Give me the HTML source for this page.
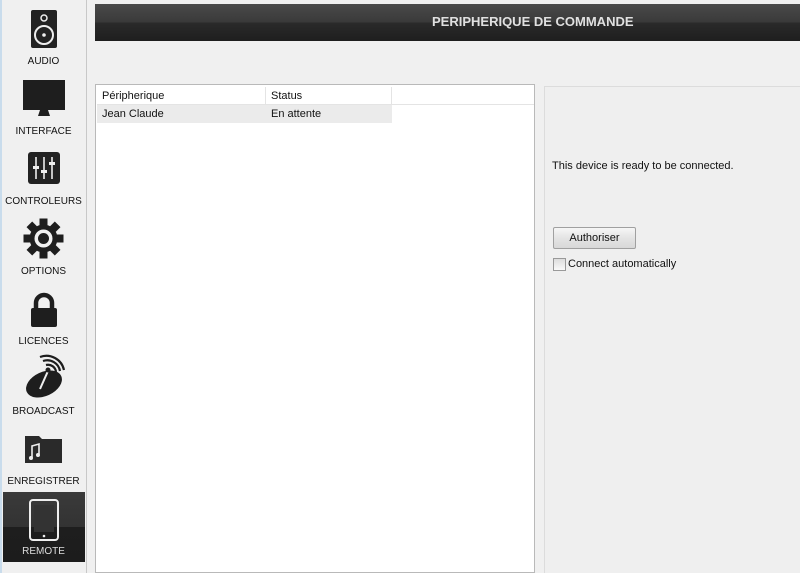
<!DOCTYPE html>
<html><head><meta charset="utf-8"><style>
*{margin:0;padding:0;box-sizing:border-box}
body{width:800px;height:573px;overflow:hidden;background:#f0f0f0;font-family:"Liberation Sans",sans-serif;font-size:11px;color:#111;position:relative}
.side{position:absolute;left:0;top:0;width:87px;height:573px;background:#f0f0f0;border-right:1px solid #c8c8c8;border-left:2px solid #c9dcec}
.lbl{position:absolute;left:0;width:87px;text-align:center;font-size:10px;color:#111}
.sel{position:absolute;left:3px;top:492px;width:82px;height:70px;background:linear-gradient(#3a3a3a 0,#333 50%,#1e1e1e 50%,#1c1c1c)}
.hdr{position:absolute;left:95px;top:4px;width:705px;height:37px;background:linear-gradient(#4a4a4a,#3a3a3a 48%,#2a2a2a 52%,#1e1e1e);color:#e0e0e0;font-weight:bold;font-size:13px;line-height:36px;padding-left:337px}
.list{position:absolute;left:95px;top:84px;width:440px;height:489px;background:#fff;border:1px solid #b9b9b9}
.hrow{position:absolute;left:1px;top:2px;height:18px;width:437px;border-bottom:1px solid #e4e4e4}
.c{position:absolute;top:0;height:18px;line-height:18px;padding-left:5px}
.row{position:absolute;left:1px;top:20px;width:295px;height:18px;background:#ebebeb}
.right{position:absolute;left:544px;top:86px;width:256px;height:487px;background:#efefef;border-left:1px solid #dcdcdc;border-top:1px solid #dcdcdc}
.btn{position:absolute;left:8px;top:140px;width:83px;height:22px;border:1px solid #a0a0a0;border-radius:2px;background:linear-gradient(#f6f6f6,#e4e4e4 50%,#d8d8d8);text-align:center;line-height:20px;font-size:11px}
.cb{position:absolute;left:8px;top:171px;width:13px;height:13px;border:1px solid #999;background:linear-gradient(#ddd,#fafafa)}
</style></head><body>
<div class="side"></div>
<div class="sel"></div>
<svg width="87" height="573" style="position:absolute;left:0;top:0">
 <rect x="31" y="10" width="26" height="38" rx="2" fill="#222"/>
 <circle cx="44" cy="18" r="3" fill="none" stroke="#eee" stroke-width="1.5"/>
 <circle cx="44" cy="35" r="9" fill="none" stroke="#eee" stroke-width="2"/>
 <circle cx="44" cy="35" r="1.8" fill="#eee"/>
 <rect x="23" y="80" width="42" height="30" fill="#1e1e1e"/>
 <path d="M40 110h8l2 6h-12z" fill="#1e1e1e"/>
 <rect x="28" y="152" width="32" height="32" rx="3" fill="#222"/>
 <g stroke="#eee" stroke-width="1.6"><line x1="36" y1="157" x2="36" y2="179"/><line x1="44" y1="157" x2="44" y2="179"/><line x1="52" y1="157" x2="52" y2="179"/></g>
 <g fill="#eee"><rect x="33" y="166" width="6" height="3"/><rect x="41" y="170" width="6" height="3"/><rect x="49" y="162" width="6" height="3"/></g>
 <g transform="translate(43.5 238.5)" fill="#1e1e1e">
  <circle r="14"/>
  <g><rect x="-4" y="-20" width="8" height="40"/><rect x="-20" y="-4" width="40" height="8"/><rect x="-4" y="-20" width="8" height="40" transform="rotate(45)"/><rect x="-4" y="-20" width="8" height="40" transform="rotate(-45)"/></g>
  <circle r="9" fill="#f0f0f0"/><circle r="5.5"/>
 </g>
 <path d="M36 310v-7a8 8 0 0 1 16 0v7" fill="none" stroke="#1e1e1e" stroke-width="4.5"/>
 <rect x="31" y="308" width="26" height="19" rx="2" fill="#1e1e1e"/>
 <ellipse cx="44" cy="384" rx="19" ry="12" transform="rotate(-25 44 384)" fill="#1e1e1e"/>
 <line x1="40" y1="389" x2="48" y2="371" stroke="#eee" stroke-width="2"/>
 <circle cx="48" cy="370" r="2.5" fill="#1e1e1e"/>
 <path d="M46 365a8 8 0 0 1 10 7M43 361a13 13 0 0 1 17 10M40 357a18 18 0 0 1 24 13" fill="none" stroke="#1e1e1e" stroke-width="2.2"/>
 <path d="M25 436h14l3 3h20v24h-37z" fill="#2a2a2a"/>
 <path d="M32 458v-12l7-2v10" fill="none" stroke="#eee" stroke-width="1.6"/>
 <circle cx="31" cy="458" r="2" fill="#eee"/><circle cx="38" cy="455" r="2" fill="#eee"/>
 <rect x="30" y="500" width="28" height="40" rx="3" fill="none" stroke="#eee" stroke-width="2"/>
 <rect x="34" y="505" width="20" height="27" fill="#333"/>
 <circle cx="44" cy="536" r="1.3" fill="#eee"/>
</svg>
<div class="lbl" style="top:56px">AUDIO</div>
<div class="lbl" style="top:126px">INTERFACE</div>
<div class="lbl" style="top:196px">CONTROLEURS</div>
<div class="lbl" style="top:266px">OPTIONS</div>
<div class="lbl" style="top:336px">LICENCES</div>
<div class="lbl" style="top:406px">BROADCAST</div>
<div class="lbl" style="top:476px">ENREGISTRER</div>
<div class="lbl" style="top:546px;color:#ddd">REMOTE</div>

<div class="hdr">PERIPHERIQUE DE COMMANDE</div>

<div class="list">
 <div class="hrow">
  <div class="c" style="left:0;width:169px;border-right:1px solid #e4e4e4">Péripherique</div>
  <div class="c" style="left:169px;width:126px;border-right:1px solid #e4e4e4">Status</div>
 </div>
 <div class="row">
  <div class="c" style="left:0">Jean Claude</div>
  <div class="c" style="left:169px">En attente</div>
 </div>
</div>

<div class="right">
 <div style="position:absolute;left:7px;top:73px">This device is ready to be connected.</div>
 <div class="btn">Authoriser</div>
 <div class="cb"></div>
 <div style="position:absolute;left:23px;top:171px">Connect automatically</div>
</div>
</body></html>
